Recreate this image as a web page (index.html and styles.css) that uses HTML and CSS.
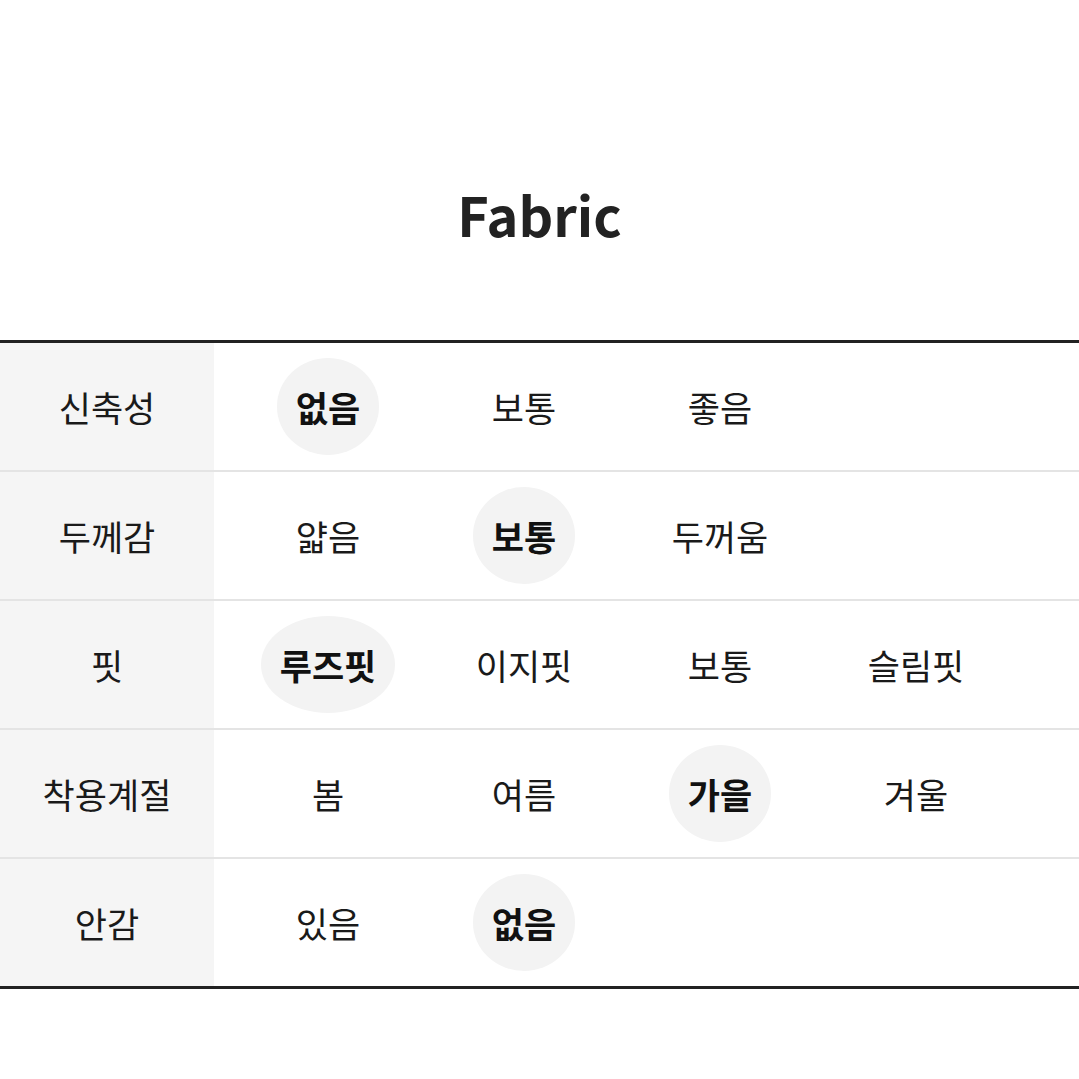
FILE: index.html
```html
<!DOCTYPE html>
<html lang="ko">
<head>
<meta charset="utf-8">
<link rel="stylesheet" href="styles.css">
</head>
<body>
<h1 class="title">Fabric</h1>
<div class="table">
  <div class="row">
    <div class="label">신축성</div>
    <div class="values">
      <div class="cell"><span class="opt on">없음</span></div>
      <div class="cell"><span class="opt">보통</span></div>
      <div class="cell"><span class="opt">좋음</span></div>
      <div class="cell"></div>
    </div>
  </div>
  <div class="row">
    <div class="label">두께감</div>
    <div class="values">
      <div class="cell"><span class="opt">얇음</span></div>
      <div class="cell"><span class="opt on">보통</span></div>
      <div class="cell"><span class="opt">두꺼움</span></div>
      <div class="cell"></div>
    </div>
  </div>
  <div class="row">
    <div class="label">핏</div>
    <div class="values">
      <div class="cell"><span class="opt on">루즈핏</span></div>
      <div class="cell"><span class="opt">이지핏</span></div>
      <div class="cell"><span class="opt">보통</span></div>
      <div class="cell"><span class="opt">슬림핏</span></div>
    </div>
  </div>
  <div class="row">
    <div class="label">착용계절</div>
    <div class="values">
      <div class="cell"><span class="opt">봄</span></div>
      <div class="cell"><span class="opt">여름</span></div>
      <div class="cell"><span class="opt on">가을</span></div>
      <div class="cell"><span class="opt">겨울</span></div>
    </div>
  </div>
  <div class="row">
    <div class="label">안감</div>
    <div class="values">
      <div class="cell"><span class="opt">있음</span></div>
      <div class="cell"><span class="opt on">없음</span></div>
      <div class="cell"></div>
      <div class="cell"></div>
    </div>
  </div>
</div>
</body>
</html>
```
FILE: styles.css
```css
html, body {
  margin: 0;
  padding: 0;
  background: #ffffff;
}
body {
  font-family: "Noto Sans CJK KR", "Noto Sans", sans-serif;
  color: #222222;
  width: 1079px;
  overflow: hidden;
}
.title {
  margin: 0;
  padding-top: 175px;
  height: 340px;
  box-sizing: border-box;
  text-align: center;
  font-size: 54px;
  font-weight: 700;
  line-height: 78px;
  color: #222222;
}
.table {
  border-top: 3px solid #222222;
  border-bottom: 3px solid #222222;
}
.row {
  display: flex;
  height: 127px;
  border-bottom: 2px solid #e4e4e4;
}
.row:last-child {
  border-bottom: none;
}
.label {
  width: 214px;
  flex: none;
  background: #f5f5f5;
  display: flex;
  align-items: center;
  justify-content: center;
  font-size: 35px;
  color: #1a1a1a;
}
.values {
  display: grid;
  grid-template-columns: repeat(4, 196px);
  padding-left: 16px;
}
.cell {
  display: flex;
  align-items: center;
  justify-content: center;
}
.opt {
  font-size: 35px;
  color: #1a1a1a;
  line-height: 1;
  padding: 0 19px;
  height: 97px;
  display: flex;
  align-items: center;
  white-space: nowrap;
}
.opt.on {
  background: #f3f3f3;
  border-radius: 50%;
  font-weight: 700;
  color: #111111;
}
```
